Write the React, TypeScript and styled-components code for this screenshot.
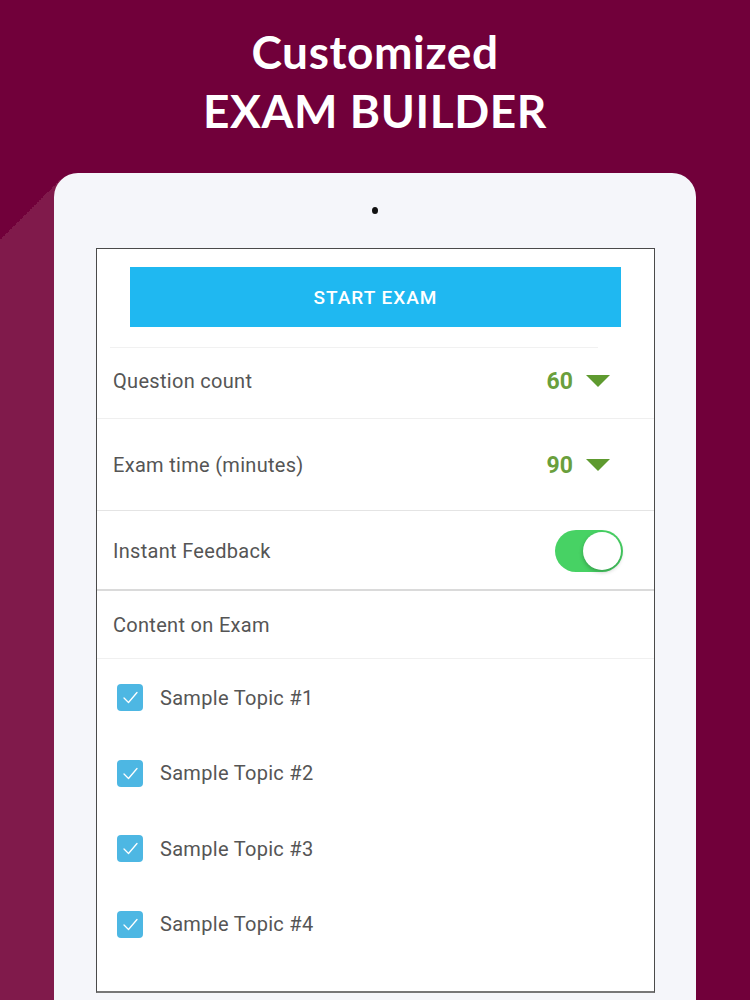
import React from "react";
import styled, { createGlobalStyle } from "styled-components";

const Global = createGlobalStyle`
  html, body { margin: 0; padding: 0; }
  body { font-family: Roboto, "Liberation Sans", sans-serif; }
`;

const Page = styled.div`
  width: 750px;
  height: 1000px;
  overflow: hidden;
  box-sizing: border-box;
  padding-top: 22px;
  background:
    linear-gradient(to bottom right, transparent 50%, #801a4b 50%) 0 180px / 60px 60px no-repeat,
    linear-gradient(#801a4b, #801a4b) 0 239px / 60px 800px no-repeat,
    #71003a;
`;

const Title = styled.h1`
  margin: 0;
  text-align: center;
  color: #ffffff;
  font-family: Lato, "Open Sans", sans-serif;
  font-weight: 700;
  font-size: 46px;
  line-height: 59px;
  letter-spacing: 0.6px;
`;

const Tablet = styled.div`
  margin: 33px 54px 0 54px;
  height: 900px;
  background: #f5f6fa;
  border-radius: 24px 24px 0 0;
  padding-top: 34px;
  box-sizing: border-box;
  display: flex;
  flex-direction: column;
  align-items: center;
`;

const Camera = styled.div`
  width: 6px;
  height: 7px;
  border-radius: 50%;
  background: #111;
`;

const Screen = styled.div`
  margin-top: 34px;
  align-self: stretch;
  margin-left: 42px;
  margin-right: 41px;
  height: 745px;
  box-sizing: border-box;
  background: #ffffff;
  border: 1px solid #4a4a4a;
  border-bottom: 2px solid #777;
  display: flex;
  flex-direction: column;
`;

const StartButton = styled.button`
  margin: 18px 33px 0 33px;
  height: 60px;
  border: none;
  background: #1fb8f1;
  color: #ffffff;
  font-family: Roboto, "Liberation Sans", sans-serif;
  font-size: 19px;
  font-weight: 500;
  letter-spacing: 1px;
  flex-shrink: 0;
`;

const Row = styled.div<{ $h: number; $line: string; $lw?: number; $lift?: number }>`
  height: ${(p) => p.$h}px;
  flex-shrink: 0;
  box-sizing: border-box;
  display: flex;
  align-items: center;
  justify-content: space-between;
  padding: 0 44px ${(p) => p.$lift ?? 0}px 16px;
  box-shadow: inset 0 -${(p) => p.$lw ?? 1}px 0 ${(p) => p.$line};
`;

const TopLine = styled.div`
  margin: 20px 56px 0 13px;
  height: 1px;
  background: #f1f1f1;
  flex-shrink: 0;
`;

const Label = styled.span`
  color: #555555;
  font-size: 20px;
  letter-spacing: 0.3px;
`;

const Value = styled.div`
  display: flex;
  align-items: center;
  gap: 13px;
  color: #6a9f3c;
  font-size: 23px;
  font-weight: 700;
`;

const Caret = styled.span`
  width: 0;
  height: 0;
  border-left: 12px solid transparent;
  border-right: 12px solid transparent;
  border-top: 12px solid #5e9a2f;
`;

const Toggle = styled.div`
  width: 68px;
  height: 42px;
  border-radius: 21px;
  background: #47d264;
  margin-right: -13px;
  display: flex;
  align-items: center;
  justify-content: flex-end;
  padding: 2px;
  box-sizing: border-box;
`;

const Knob = styled.div`
  width: 38px;
  height: 38px;
  border-radius: 50%;
  background: #ffffff;
  box-shadow: 0 2px 4px rgba(0, 0, 0, 0.25);
`;

const TopicList = styled.div`
  padding-top: 1px;
  display: flex;
  flex-direction: column;
`;

const Topic = styled.div`
  height: 75.5px;
  flex-shrink: 0;
  display: flex;
  align-items: center;
  gap: 17px;
  padding-left: 20px;
`;

const Check = styled.span`
  width: 26px;
  height: 27px;
  border-radius: 4px;
  background: #4db7e3;
  display: flex;
  align-items: center;
  justify-content: center;
`;

const topics = ["Sample Topic #1", "Sample Topic #2", "Sample Topic #3", "Sample Topic #4"];

export default function App() {
  return (
    <Page>
      <Global />
      <Title>
        Customized
        <br />
        EXAM BUILDER
      </Title>
      <Tablet>
        <Camera />
        <Screen>
          <StartButton>START EXAM</StartButton>
          <TopLine />
          <Row $h={71} $line="#efefef" $lift={5}>
            <Label>Question count</Label>
            <Value>
              60 <Caret />
            </Value>
          </Row>
          <Row $h={92} $line="#e4e4e4">
            <Label>Exam time (minutes)</Label>
            <Value>
              90 <Caret />
            </Value>
          </Row>
          <Row $h={80} $line="#dadada" $lw={2}>
            <Label>Instant Feedback</Label>
            <Toggle>
              <Knob />
            </Toggle>
          </Row>
          <Row $h={68} $line="#f0f0f0">
            <Label>Content on Exam</Label>
          </Row>
          <TopicList>
            {topics.map((t) => (
              <Topic key={t}>
                <Check>
                  <svg width="17" height="15" viewBox="0 0 17 15" fill="none">
                    <path d="M2 8 L6.5 12.5 L15 2.5" stroke="#ffffff" strokeWidth="1.3" strokeLinecap="round" strokeLinejoin="round" />
                  </svg>
                </Check>
                <Label>{t}</Label>
              </Topic>
            ))}
          </TopicList>
        </Screen>
      </Tablet>
    </Page>
  );
}
